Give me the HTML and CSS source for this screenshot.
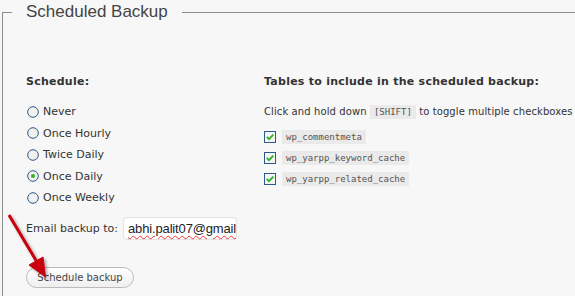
FILE: index.html
```html
<!DOCTYPE html>
<html lang="en">
<head>
  <meta charset="UTF-8">
  <title>Scheduled Backup</title>
  <link rel="stylesheet" href="styles.css">
</head>
<body>

<form class="backup-form" onsubmit="event.preventDefault();">
  <fieldset class="backup">
    <legend>Scheduled Backup</legend>

    <div class="columns">
      <!-- Schedule choices -->
      <div class="col-schedule">
        <h3>Schedule:</h3>
        <ul class="options">
          <li><svg class="radio" width="12" height="12"><circle cx="6" cy="6" r="5.3"/></svg>Never</li>
          <li><svg class="radio" width="12" height="12"><circle cx="6" cy="6" r="5.3"/></svg>Once Hourly</li>
          <li><svg class="radio" width="12" height="12"><circle cx="6" cy="6" r="5.3"/></svg>Twice Daily</li>
          <li><svg class="radio" width="12" height="12"><circle cx="6" cy="6" r="5.3"/><circle class="dot" cx="6" cy="6" r="2"/></svg>Once Daily</li>
          <li><svg class="radio" width="12" height="12"><circle cx="6" cy="6" r="5.3"/></svg>Once Weekly</li>
        </ul>
      </div>

      <!-- Tables -->
      <div class="col-tables">
        <h3>Tables to include in the scheduled backup:</h3>
        <p class="hint">Click and hold down <code>[SHIFT]</code> to toggle multiple checkboxes</p>
        <ul class="options tables">
          <li><svg class="check" width="12" height="12"><rect x="0.5" y="0.5" width="11" height="11"/><path d="M2.8 5.8 L5 8.2 L9.3 3.6"/></svg><code>wp_commentmeta</code></li>
          <li><svg class="check" width="12" height="12"><rect x="0.5" y="0.5" width="11" height="11"/><path d="M2.8 5.8 L5 8.2 L9.3 3.6"/></svg><code>wp_yarpp_keyword_cache</code></li>
          <li><svg class="check" width="12" height="12"><rect x="0.5" y="0.5" width="11" height="11"/><path d="M2.8 5.8 L5 8.2 L9.3 3.6"/></svg><code>wp_yarpp_related_cache</code></li>
        </ul>
      </div>
    </div>

    <div class="email-row">
      <label>Email backup to:</label>
      <span class="text-box"><span class="misspelt">abhi.palit07@gmail</span></span>
    </div>

    <button type="submit" class="button">Schedule backup</button>
  </fieldset>
</form>

<!-- red annotation arrow -->
<svg class="arrow" width="60" height="80" viewBox="0 0 60 80">
  <defs>
    <filter id="shadow" x="-30%" y="-30%" width="160%" height="160%">
      <feDropShadow dx="2" dy="2" stdDeviation="1.5" flood-color="#000" flood-opacity="0.35"/>
    </filter>
  </defs>
  <g filter="url(#shadow)" fill="#c8000a" stroke="#c8000a">
    <line x1="9" y1="10" x2="37" y2="57" stroke-width="3"/>
    <polygon points="45.5,72 43,52 29,60" stroke-width="1"/>
  </g>
</svg>

</body>
</html>
```

FILE: styles.css
```css
html, body {
  margin: 0;
  overflow: hidden;
}

body {
  background-color: #f7f7f7;
  font-family: "DejaVu Sans", Verdana, sans-serif;
  font-size: 11px;
  color: #333;
  position: relative;
  height: 296px;
}

.backup {
  box-sizing: border-box;
  margin: 0 0 0 2px;
  padding: 0 0 0 23px;
  width: 573px;
  height: 296px;
  border: 1px solid #8c8c8c;
  border-right: none;
  border-bottom: none;
}

.backup legend {
  margin-left: -14px;
  padding: 0 14px;
  font-family: "Liberation Sans", Arial, sans-serif;
  font-size: 17px;
  line-height: 24px;
  color: #444;
}

.columns {
  display: grid;
  grid-template-columns: 238px auto;
  margin-top: 50px;
}

h3 {
  margin: 0;
  font-size: 11px;
  line-height: 16px;
  font-weight: bold;
  letter-spacing: 0.25px;
  color: #333;
}

.options {
  list-style: none;
  margin: 11px 0 0 0;
  padding: 0;
}

.options li {
  display: flex;
  align-items: center;
  height: 21.5px;
}

.radio {
  margin: 0 4px 0 1px;
}

.radio circle {
  fill: #f2f2ee;
  stroke: #2d5a8c;
  stroke-width: 1;
}

.radio .dot {
  fill: #2bb52b;
  stroke: none;
}

.hint {
  margin: 14px 0 0 0;
  line-height: 16px;
  font-size: 10px;
  letter-spacing: 0.1px;
  color: #333;
  white-space: nowrap;
}

code {
  font-family: "DejaVu Sans Mono", monospace;
  font-size: 9px;
  letter-spacing: 0;
  background-color: #eaeaea;
  color: #555;
  padding: 2px 4px;
}

.tables {
  margin-top: 6.5px;
}

.tables li {
  height: 21px;
}

.check {
  margin-right: 6px;
}

.check rect {
  fill: #f4f4f2;
  stroke: #2d5a8c;
}

.check path {
  fill: none;
  stroke: #2bb52b;
  stroke-width: 1.8;
}

.email-row {
  display: flex;
  align-items: center;
  gap: 5px;
  margin-top: 8px;
  height: 24px;
}

.text-box {
  display: block;
  width: 114px;
  height: 23px;
  box-sizing: border-box;
  padding-left: 4px;
  border: 1px solid #e2e2e2;
  border-radius: 4px;
  background: #fff;
  white-space: nowrap;
  font-family: "Liberation Sans", Arial, sans-serif;
  font-size: 13px;
  line-height: 21px;
  letter-spacing: -0.15px;
  color: #222;
}

.misspelt {
  text-decoration: underline wavy #e33;
  text-decoration-thickness: 1px;
  text-underline-offset: 2px;
}

.button {
  display: block;
  margin-top: 26px;
  width: 108px;
  height: 21px;
  padding: 0;
  border: 1px solid #bbb;
  border-radius: 11px;
  background: linear-gradient(#ffffff, #efefef);
  font-family: "DejaVu Sans", Verdana, sans-serif;
  font-size: 10px;
  color: #464646;
  cursor: pointer;
}

.arrow {
  position: absolute;
  left: 0;
  top: 205px;
}
```
